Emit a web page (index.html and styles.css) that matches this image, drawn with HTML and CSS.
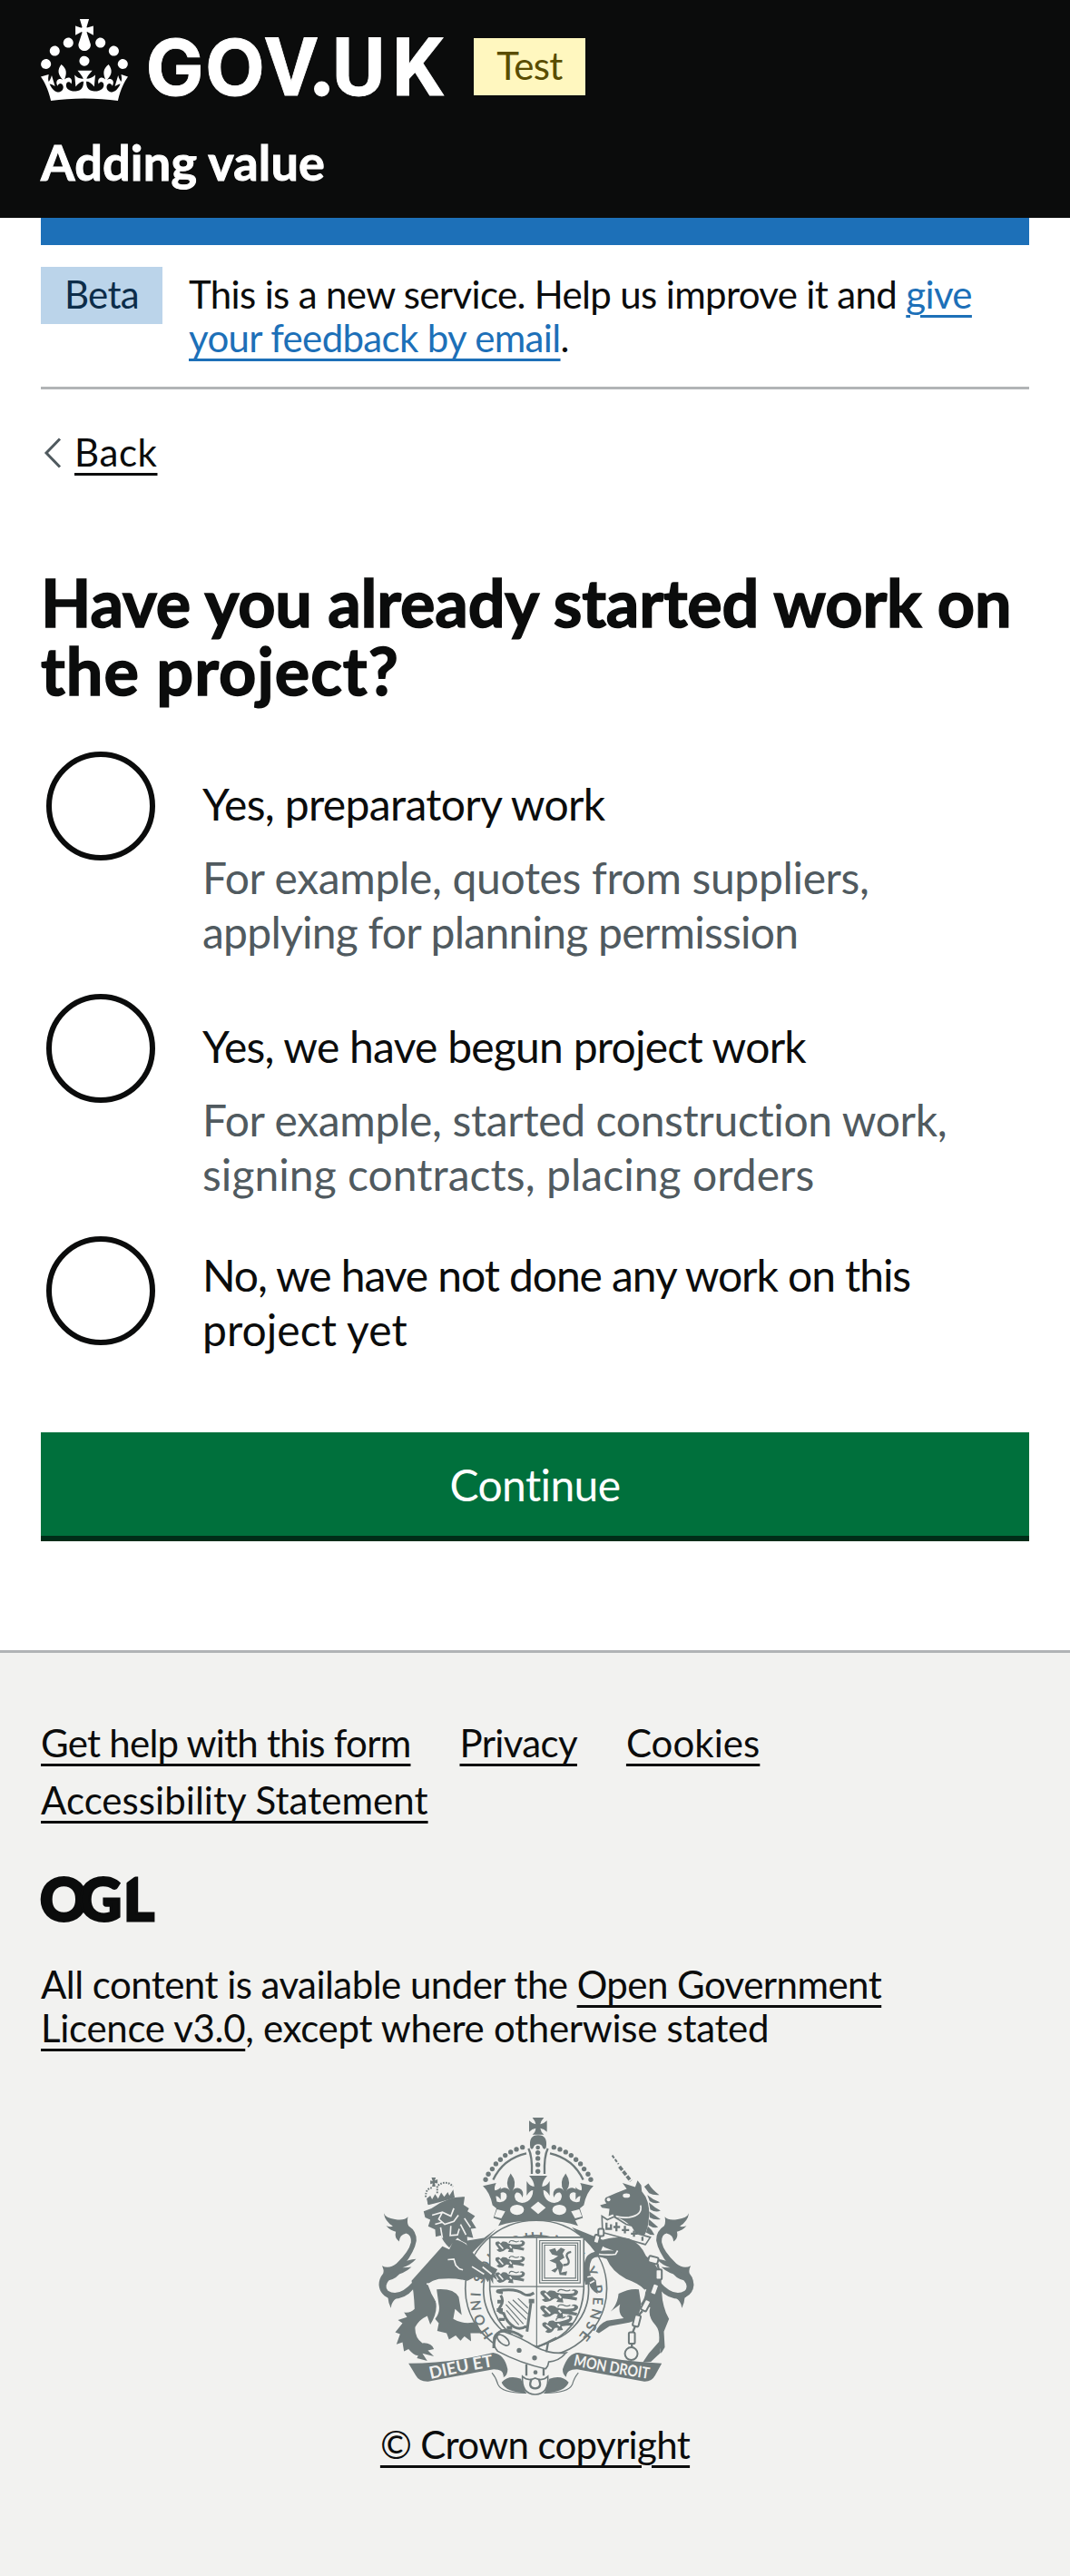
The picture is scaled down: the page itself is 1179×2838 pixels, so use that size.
FILE: index.html
```html
<!DOCTYPE html>
<html lang="en">
<head>
<meta charset="utf-8">
<title>Have you already started work on the project? - Adding value - GOV.UK</title>
<link rel="stylesheet" href="styles.css">
</head>
<body>
<header class="header">
  <div class="header-top">
    <svg class="logo" viewBox="0 0 446 90" role="img" aria-label="GOV.UK">
      <g transform="scale(3)"><path d="M22.6 10.4c-1 .4-2-.1-2.4-1-.4-.9.1-2 1-2.4.9-.4 2 .1 2.4 1s-.1 2-1 2.4m-5.9 6.7c-.9.4-2-.1-2.4-1-.4-.9.1-2 1-2.4.9-.4 2 .1 2.4 1s-.1 2-1 2.4m10.8-3.7c-1 .4-2-.1-2.4-1-.4-.9.1-2 1-2.4.9-.4 2 .1 2.4 1s0 2-1 2.4m3.3 4.8c-1 .4-2-.1-2.4-1-.4-.9.1-2 1-2.4.9-.4 2 .1 2.4 1s-.1 2-1 2.4M17 4.7l2.3 1.2V2.5l-2.3.7-.2-.2.9-3h-3.4l.9 3-.2.2c-.1.1-2.3-.7-2.3-.7v3.4L15 4.7c.1.1.1.2.2.2l-1.3 4c-.1.2-.1.4-.1.6 0 1.1.8 2 1.9 2.2h.7c1-.2 1.9-1.1 1.9-2.1 0-.2 0-.4-.1-.6l-1.3-4c-.1-.2 0-.2.1-.3m-7.6 5.7c.9.4 2-.1 2.4-1 .4-.9-.1-2-1-2.4-.9-.4-2 .1-2.4 1s0 2 1 2.4m-5 3c.9.4 2-.1 2.4-1 .4-.9-.1-2-1-2.4-.9-.4-2 .1-2.4 1s.1 2 1 2.4m-3.2 4.8c.9.4 2-.1 2.4-1 .4-.9-.1-2-1-2.4-.9-.4-2 .1-2.4 1s0 2 1 2.4m14.8 11c4.4 0 8.6.3 12.3.8 1.1-4.5 2.4-7 3.7-8.8l-2.5-.9c.2 1.3.3 1.9 0 2.7-.4-.4-.8-1.1-1.1-2.3l-1.2 4c.7-.5 1.3-.8 2-.9-1.1 2.5-2.6 3.1-3.5 3-1.1-.2-1.7-1.2-1.5-2.1.3-1.2 1.5-1.5 2.1-.1 1.1-2.3-.8-3-2-2.3 1.9-1.9 2.1-3.5.6-5.6-2.1 1.6-2.1 3.2-1.2 5.5-1.2-1.4-3.2-.6-2.5 1.6.9-1.4 2.1-.5 1.9.8-.2 1.1-1.7 2.1-3.5 1.9-2.7-.2-2.9-2.1-2.9-3.6.7-.1 1.9.5 2.9 1.9l.4-4.3c-1.1 1.1-2.1 1.4-3.2 1.4.4-1.2 2.1-3 2.1-3h-5.4s1.7 1.9 2.1 3c-1.1 0-2.1-.2-3.2-1.4l.4 4.3c1-1.4 2.2-2 2.9-1.9-.1 1.5-.2 3.4-2.9 3.6-1.9.2-3.4-.8-3.5-1.9-.2-1.3 1-2.2 1.9-.8.7-2.3-1.2-3-2.5-1.6.9-2.2.9-3.9-1.2-5.5-1.5 2-1.3 3.7.6 5.6-1.2-.7-3.1 0-2 2.3.6-1.4 1.8-1.1 2.1.1.2.9-.3 1.9-1.5 2.1-.9.2-2.4-.5-3.5-3 .6 0 1.2.3 2 .9l-1.2-4c-.3 1.1-.7 1.9-1.1 2.3-.3-.8-.2-1.4 0-2.7l-2.9.9C1.3 23 2.6 25.5 3.7 30c3.7-.5 7.9-.8 12.3-.8"/></g>
      <text class="wordmark" y="84" x="115.500 181 247 321 387"><tspan class="wordmark-round">GO</tspan>VUK</text>
      <circle cx="309.500" cy="77" r="8.500"/>
    </svg>
    <span class="tag tag-test">Test</span>
  </div>
  <a class="service-name">Adding value</a>
</header>

<div class="container">
  <div class="blue-bar"></div>
  <div class="phase-banner">
    <span class="tag tag-beta">Beta</span>
    <p class="phase-text">This is a new service. Help us improve it and <a class="link link-blue">give<br>your feedback by email</a>.</p>
  </div>
  <div class="back">
    <svg class="chevron" viewBox="0 0 20 34"><path d="M18 1.500 3 17 18 32.500"/></svg>
    <a class="link back-link">Back</a>
  </div>
  <main>
    <h1 class="title">Have you already started work on<br><span class="title-end">the project?</span></h1>
    <div class="radios">
      <div class="radio">
        <span class="radio-dot"></span>
        <div class="radio-body">
          <label class="radio-label">Yes, preparatory work</label>
          <div class="hint">For example, quotes from suppliers,<br><span class="snug">applying for planning permission</span></div>
        </div>
      </div>
      <div class="radio">
        <span class="radio-dot"></span>
        <div class="radio-body">
          <label class="radio-label snug">Yes, we have begun project work</label>
          <div class="hint">For example, started construction work,<br><span class="loose">signing contracts, placing orders</span></div>
        </div>
      </div>
      <div class="radio">
        <span class="radio-dot"></span>
        <div class="radio-body radio-body-tall">
          <label class="radio-label tight">No, we have not done any work on this<br><span class="loose">project yet</span></label>
        </div>
      </div>
    </div>
    <button class="button" type="button">Continue</button>
  </main>
</div>

<footer class="footer">
  <nav class="footer-links">
    <a class="link snug">Get help with this form</a>
    <a class="link">Privacy</a>
    <a class="link loose">Cookies</a>
    <a class="link loose">Accessibility Statement</a>
  </nav>
  <svg class="ogl" viewBox="0 0 124 51" role="img" aria-label="Open Government Licence">
    <text class="ogl-text" y="48.500" x="-1 42 91">OGL</text>
    <path class="ogl-cut" d="M90 -2H107L92 9Z"/>
  </svg>
  <p class="licence">All content is available under the <a class="link">Open Government<br><span class="licence-end">Licence v3.0</span></a><span class="licence-end">, except where otherwise stated</span></p>
  <div class="copyright">
    <svg class="crest" viewBox="6 60 1125 940" aria-hidden="true">
      <defs>
        <g id="tail">
          <path d="M68 388Q75 405 105 408Q135 414 148 400Q144 420 150 430Q178 448 176 480Q170 515 135 560Q108 595 85 610Q68 630 82 645Q118 668 165 615L165 640Q140 672 95 672Q55 662 52 625Q52 605 66 588Q70 575 62 562Q85 575 110 555Q152 515 158 485Q160 460 142 455Q120 460 119 482Q102 470 108 450Q90 445 76 430Q92 435 98 431Q72 415 68 388Z"/>
          <path d="M95 585Q120 545 175 540Q155 562 130 568Q150 568 160 566Q135 590 90 598Z"/>
          <path d="M64 615Q75 582 125 578Q115 605 80 612Z"/>
          <path d="M68 655 112 668Q92 682 92 702Q84 690 82 668Z"/>
        </g>
        <g id="half-crown">
          <path d="M396 298 440 288Q432 304 436 313Q448 312 455 302V344Q446 330 439 332L442 350Q462 356 473 341Q480 322 463 319Q452 320 449 330Q446 308 466 304Q480 304 486 315Q466 290 488 257Q512 288 494 315Q502 302 517 306Q534 314 527 336Q520 318 507 320Q496 330 505 345Q522 362 545 348Q562 336 562 312Q552 312 541 330V282Q552 300 566 300Q566 282 549 264H579V414Q500 412 447 430L456 412 431 404 441 372 428 362Q420 320 396 298Z"/>
          <ellipse class="bg" cx="509" cy="377" rx="23" ry="17"/>
          <path class="bg" d="M443 375 470 382 457 405 434 399Z"/>
          <path class="line5" d="M430 278Q462 208 540 190" stroke-width="10"/>
          <path class="line5" d="M547 174Q560 200 558 258" stroke-width="9"/>
          <g><circle cx="527" cy="170" r="8"/><circle cx="507" cy="177" r="8"/><circle cx="488" cy="186" r="8"/><circle cx="470" cy="197" r="8"/><circle cx="454" cy="211" r="8"/><circle cx="439" cy="225" r="8"/><circle cx="427" cy="242" r="8"/><circle cx="414" cy="259" r="8"/><circle cx="405" cy="277" r="8"/></g>
        </g>
        <g id="lion">
          <path d="M3 12Q0 0 14 2L20 8 26 2Q40 0 44 8Q62 14 88 10Q96 2 82 2Q92 -6 100 4Q102 16 84 20L98 24 96 32 76 28 60 26 62 38 44 36 48 28Q40 24 36 28Q26 38 14 36L6 30 14 26Z"/>
          <path class="linebg" d="M14 10 28 26M50 16 56 24"/>
          <path class="line3" d="M48 6Q50 -4 62 0Q72 6 80 0"/>
        </g>
        <path id="motto-left" d="M223 937Q330 912 440 894"/>
        <path id="motto-right" d="M695 892Q820 918 950 937"/>
        <path id="garter" d="M432 790A186 186 0 1 1 690 816"/>
      </defs>

      <use href="#tail"/>
      <use href="#tail" transform="translate(1146 0) scale(-1 1)"/>

      <path d="M560 72H598Q587 84 586 94Q598 92 608 82V119Q598 108 586 107Q588 120 598 128H560Q570 120 571 107Q559 108 549 119V82Q559 92 571 94Q570 84 560 72Z"/>
      <path d="M553 172Q546 130 579 130Q612 130 605 172Q600 180 594 172Q592 160 579 160Q566 160 563 172Q558 180 553 172Z"/>
      <circle cx="578" cy="171" r="7"/><circle cx="578" cy="188" r="8"/><circle cx="578" cy="207" r="8"/><circle cx="578" cy="228" r="8"/><circle cx="578" cy="250" r="8"/>
      <use href="#half-crown"/>
      <use href="#half-crown" transform="translate(1158 0) scale(-1 1)"/>
      <path class="bg" d="M579 350 604 370 579 391 554 370Z"/>

      <path d="M340 480 400 470 440 440 350 530ZM800 480 740 455 690 435 780 530Z"/>
      <ellipse class="outline" cx="572" cy="638" rx="234" ry="226"/>
      <ellipse class="outline" cx="572" cy="640" rx="174" ry="178"/>
      <text class="garter-text"><textPath href="#garter" textLength="850">HONI SOIT QUI MAL Y PENSE</textPath></text>

      <path class="outline" d="M419 468H730V640Q722 790 575 830Q428 790 419 640Z"/>
      <path class="line3" d="M574 468V830M419 631H730"/>
      <use href="#lion" x="458" y="480" transform="translate(-23 0)"/>
      <use href="#lion" x="458" y="532" transform="translate(-23 0)"/>
      <use href="#lion" x="458" y="582" transform="translate(-23 0)"/>
      <use href="#lion" transform="translate(583 642) scale(1.280 1.100)"/>
      <use href="#lion" transform="translate(583 692) scale(1.280 1.100)"/>
      <use href="#lion" transform="translate(588 750) rotate(-14) scale(1.050 1.100)"/>
      <path class="line3" d="M584 479H718V619H584ZM592 487H710V611H592ZM600 494H703V603H600Z"/>
      <path d="M615 510 635 504 640 515 654 502 668 508 660 522 666 535 650 545 662 560 655 585 675 580 672 594 650 592 645 572 635 585 622 578 640 568 638 555 616 545 630 540 645 530 625 525Z"/>
      <path class="line5" d="M662 560Q690 560 675 535Q668 520 688 516"/>
      <path class="harp" d="M462 652Q440 650 445 645Q505 635 530 655Q545 665 565 652M455 660Q468 680 452 700Q440 715 465 720Q475 750 500 765Q520 775 540 762M555 685 542 780"/>
      <path d="M444 675h16v12h-16zM442 703h20v12h-20zM450 735h18v10h-18zM475 762h18v12h-18zM548 672h18v14h-18z"/>
      <path class="line3" d="M480 680 540 740M472 690 530 755M474 710 515 758M495 675 545 722M512 670 545 702"/>

      <path d="M262 498 160 612Q168 650 170 705Q155 720 135 716L145 732 115 742 130 752 106 782 122 788 110 822 130 815 135 845 150 838Q170 862 182 858L178 868 212 877 196 852 234 862 214 842 234 838Q226 816 196 818Q170 800 172 765Q185 740 212 728L222 757Q248 715 240 680Q224 655 213 622Q230 610 250 606Q300 600 345 612L372 598 392 608 402 600 412 616 420 604 430 622 430 600 444 610 436 590 444 574 412 558Q380 550 350 500Q330 478 300 475L285 508Z"/>
      <path d="M243 640Q300 636 316 665L326 725 304 705 298 738Q330 758 375 748L392 785 355 785 357 812 335 796 322 810 306 793 284 806 276 785 245 778 250 752 238 738Q256 715 250 690Z"/>
      <path class="linebg" d="M280 542 300 540 306 560 318 572 330 576M210 622 230 625 240 640 236 660 244 685M360 565 400 590M395 566 425 590"/>
      <path d="M200 382 226 372Q280 332 336 334L332 360 350 372 345 382 370 398 358 412 374 438 356 440 364 470 344 466 345 490 325 480 312 470 298 484 285 502Q262 482 258 462L240 466 238 442 215 432 222 410 205 402Z"/>
      <path class="linebg" d="M228 395 262 385 290 398 300 372M262 385 250 408 270 425 300 415 315 395M238 425 262 418M290 430 288 462 312 460 318 440 M322 425 340 460M335 405 355 435M256 435 262 470"/>
      <path class="line5" d="M214 358Q250 350 302 334"/>
      <path d="M210 340 222 330 228 342 238 325 248 340 258 320 268 334 280 318 285 330 298 310 302 334 214 358ZM226 270H240L237 280 246 276V290L237 288 239 300H228L230 290 222 292V280L230 282Z"/>
      <path class="dots" d="M207 335Q206 305 230 304M245 322V298Q275 276 297 300"/>

      <path d="M784 362 805 356Q795 345 803 336Q835 322 872 308L858 288 900 302 908 280 920 296 922 316Q948 345 946 395Q944 440 930 462L900 452Q870 405 834 404L826 392 812 398 815 374 790 370Z"/>
      <ellipse class="bg" cx="871" cy="330" rx="12" ry="7"/><circle class="bg" cx="812" cy="343" r="6"/>
      <path class="linebg" d="M918 362Q925 395 880 402Q850 404 836 398"/>
      <path d="M930 300 944 290Q955 310 980 328Q960 330 946 322ZM940 328Q960 345 982 352Q965 360 948 348ZM945 352Q965 370 984 380Q968 388 950 376ZM946 382Q965 395 984 408Q965 412 948 402ZM946 408Q960 420 976 435Q962 440 944 428ZM942 432Q955 442 964 460Q950 462 936 452Z"/>
      <path class="horn" d="M824 197 845 226"/><path class="horn horn-thick" d="M848 234 886 282"/>
      <path class="outline" d="M790 398 808 410 830 400 850 412 870 425 890 430 905 455 950 468 934 492Q860 470 792 452Z"/>
      <path class="line5" d="M805 420V440H820V425M838 418V448M828 434H850M866 430V455M856 444H880M896 446V466M886 456H908M924 466V480"/>
      <path d="M735 625Q722 570 738 535Q752 508 830 512Q780 500 782 480Q830 462 880 472Q920 490 936 530Q980 562 986 605L988 650Q990 700 1012 738L995 780 998 832 986 852 978 820Q984 780 968 760Q940 730 950 700L918 690Q940 660 930 640Q910 620 870 606Q822 580 806 540Q770 525 756 542Q744 565 752 592L770 610 776 655Q752 642 748 622Z"/>
      <path class="linebg" d="M780 524Q815 528 835 524L842 512M742 600 758 596M750 620 765 612M935 640 925 665"/>
      <path d="M845 655Q880 636 912 640L920 690Q912 745 880 750L815 762 780 785 770 780Q780 755 806 744L862 736Q842 720 850 690L818 714Q842 690 845 655Z"/>
      <path d="M980 812 984 850 952 880 925 882 945 852Z"/>
      <g class="chain"><rect x="944" y="532" width="32" height="22" rx="6" transform="rotate(15 960 543)"/><rect x="968" y="574" width="20" height="34" rx="5"/><rect x="954" y="622" width="20" height="36" rx="5" transform="rotate(20 964 640)"/><rect x="925" y="674" width="20" height="38" rx="5" transform="rotate(28 935 693)"/><rect x="895" y="725" width="20" height="38" rx="5" transform="rotate(14 905 744)"/><rect x="879" y="782" width="20" height="38" rx="5"/><circle cx="887" cy="853" r="21"/></g>
      <g class="line5"><path d="M974 556 978 574M976 608 970 622M956 658 944 674M924 712 912 725M900 762 892 782M889 820V832"/></g>
      <g class="chain"><rect x="764" y="460" width="18" height="28" rx="5" transform="rotate(15 773 474)"/><rect x="778" y="440" width="18" height="24" rx="5"/></g>

      <path d="M150 885Q290 885 430 850Q468 855 478 905Q478 925 464 932Q468 905 432 905Q320 925 215 945Q185 946 174 925Z"/>
      <path d="M988 885Q860 880 712 850Q678 850 660 905Q660 924 672 930Q672 905 708 905Q830 928 930 945Q955 946 966 925Z"/>
      <text class="motto"><textPath href="#motto-left" textLength="212" lengthAdjust="spacingAndGlyphs">DIEU ET</textPath></text>
      <text class="motto motto-small"><textPath href="#motto-right" textLength="254" lengthAdjust="spacingAndGlyphs">MON DROIT</textPath></text>

      <path class="outline" d="M432 800Q438 780 465 780Q520 798 570 830Q620 856 672 850Q645 880 614 880Q612 895 604 903Q520 885 445 845Q430 830 432 800Z"/>
      <path class="harp" d="M432 835Q432 780 465 776Q500 776 528 798"/>
      <ellipse class="outline" cx="463" cy="808" rx="24" ry="12" transform="rotate(40 463 808)"/>
      <circle cx="516" cy="842" r="8"/><circle cx="567" cy="867" r="8"/>
      <path class="line5" d="M574 832 612 815 606 848M612 815 640 800"/>
      <path class="line5" d="M540 888V926M597 902V926"/><circle cx="570" cy="915" r="7"/>
      <path class="line3" d="M426 916Q440 932 446 955Q460 984 540 983M712 916Q698 932 692 955Q678 984 598 983"/>
      <path d="M458 948Q480 922 522 936L538 983Q470 980 458 948ZM680 948Q658 922 616 936L600 983Q668 980 680 948Z"/>
      <path class="outline" d="M527 928Q545 946 569 934Q593 946 611 928Q615 986 569 988Q523 986 527 928Z"/>
      <path class="line5" d="M557 938Q544 966 569 968Q594 966 581 938"/>
    </svg>
    <a class="link">© Crown copyright</a>
  </div>
</footer>
</body>
</html>
```
FILE: styles.css
```css
* { box-sizing: border-box; }
body {
  margin: 0;
  background: #fff;
  color: #0b0c0c;
  font: 400 42px/48px Lato, "Liberation Sans", sans-serif;
  letter-spacing: -0.65px;
}
p, h1 { margin: 0; }

.link {
  text-decoration: underline;
  text-decoration-thickness: 3px;
  text-underline-offset: 7px;
}
.link-blue { color: #1d70b8; }

.header {
  height: 240px;
  padding: 21px 45px 0;
  background: #0b0c0c;
  color: #fff;
}
.header-top { display: flex; gap: 31px; }
.logo { width: 446px; height: 90px; fill: #fff; overflow: visible; }
.wordmark { font: 700 88.500px Roboto, sans-serif; letter-spacing: 0; stroke: #fff; stroke-width: 0.8px; }
.wordmark-round { font: 700 85.500px Inter, sans-serif; }
.service-name {
  display: block;
  margin-top: 35px;
  font-size: 54px;
  line-height: 66px;
  font-weight: 700;
  letter-spacing: 0.200px;
  -webkit-text-stroke: 1px currentColor;
}

.tag {
  flex: none;
  height: 63px;
  padding: 6px 0 9px;
  text-align: center;
}
.tag-test { width: 123px; margin-top: 21px; background: #fff7bf; color: #594d00; }
.tag-beta { width: 134px; background: #bbd4ea; color: #0c2d4a; }

.container { padding: 0 45px; }
.blue-bar { height: 30px; background: #1d70b8; }
.phase-banner {
  display: flex;
  gap: 29px;
  height: 159px;
  padding-top: 24px;
  border-bottom: 3px solid #b1b4b6;
}
.phase-text { padding-top: 6px; }

.back { display: flex; align-items: flex-start; padding-top: 45px; gap: 14px; }
.back-link { letter-spacing: 0.600px; }
.chevron {
  width: 20px;
  height: 34px;
  margin: 8px 0 0 3px;
  fill: none;
  stroke: #505a5f;
  stroke-width: 3;
}

.title {
  margin-top: 104px;
  font-size: 72px;
  line-height: 75px;
  font-weight: 700;
  letter-spacing: -0.150px;
  -webkit-text-stroke: 1.500px currentColor;
}
.title-end { letter-spacing: 1px; }

.radios {
  display: flex;
  flex-direction: column;
  gap: 27px;
  margin-top: 52px;
  padding-left: 6px;
  font-size: 48px;
  line-height: 60px;
}
.radio { display: flex; gap: 52px; min-height: 120px; }
.radio-dot {
  flex: none;
  width: 120px;
  height: 120px;
  border: 6px solid #0b0c0c;
  border-radius: 50%;
}
.radio-body { padding-top: 28px; }
.radio-body-tall { padding-top: 13px; }
.radio-label { display: block; }
.hint { margin-top: 21px; margin-bottom: 11px; color: #505a5f; letter-spacing: -0.350px; }
.loose { letter-spacing: 0.050px; }
.snug { letter-spacing: -0.750px; }
.tight { letter-spacing: -1.080px; }

.button {
  display: block;
  width: 100%;
  height: 114px;
  margin-top: 83px;
  padding: 0;
  border: 0;
  background: #00703c;
  box-shadow: 0 6px 0 #002d18;
  color: #fff;
  font: 400 48px/57px Lato, "Liberation Sans", sans-serif;
  letter-spacing: -0.600px;
}

.footer {
  height: 1020px;
  margin-top: 126px;
  padding: 75px 45px 0;
  border-top: 3px solid #b1b4b6;
  background: #f2f2f0;
}
.footer-links { display: flex; flex-wrap: wrap; gap: 15px 54px; }
.ogl { display: block; width: 124px; height: 51px; margin-top: 60px; overflow: visible; }
.ogl-text { font: 900 65px Lato, sans-serif; letter-spacing: 0; fill: #0b0c0c; stroke: #0b0c0c; stroke-width: 3px; }
.ogl-cut { fill: #f2f2f0; }
.licence { margin-top: 44px; letter-spacing: -0.540px; }
.licence-end { letter-spacing: -0.300px; }

.copyright { display: flex; flex-direction: column; align-items: center; margin-top: 71px; }
.crest { width: 375px; height: 313px; margin-bottom: 27px; fill: #6e797a; }
.bg { fill: #f2f2f0; }
.line3, .line5, .harp, .dots, .horn { fill: none; stroke: #6e797a; }
.line3 { stroke-width: 3.500px; }
.line5 { stroke-width: 7px; }
.harp { stroke-width: 9px; }
.linebg { fill: none; stroke: #f2f2f0; stroke-width: 5px; }
.outline, .chain { fill: #f2f2f0; stroke: #6e797a; stroke-width: 5px; }
.chain { stroke-width: 6px; }
.dots { stroke-width: 6px; stroke-dasharray: 5 4; }
.horn { stroke-width: 6px; stroke-dasharray: 11 5; }
.horn-thick { stroke-width: 11px; stroke-dasharray: 15 5; }
.garter-text { font: 700 46px Lato, sans-serif; letter-spacing: 0; }
.motto { font: 700 56px Lato, sans-serif; letter-spacing: 0; fill: #f2f2f0; }
.motto-small { font-size: 52px; }
```
